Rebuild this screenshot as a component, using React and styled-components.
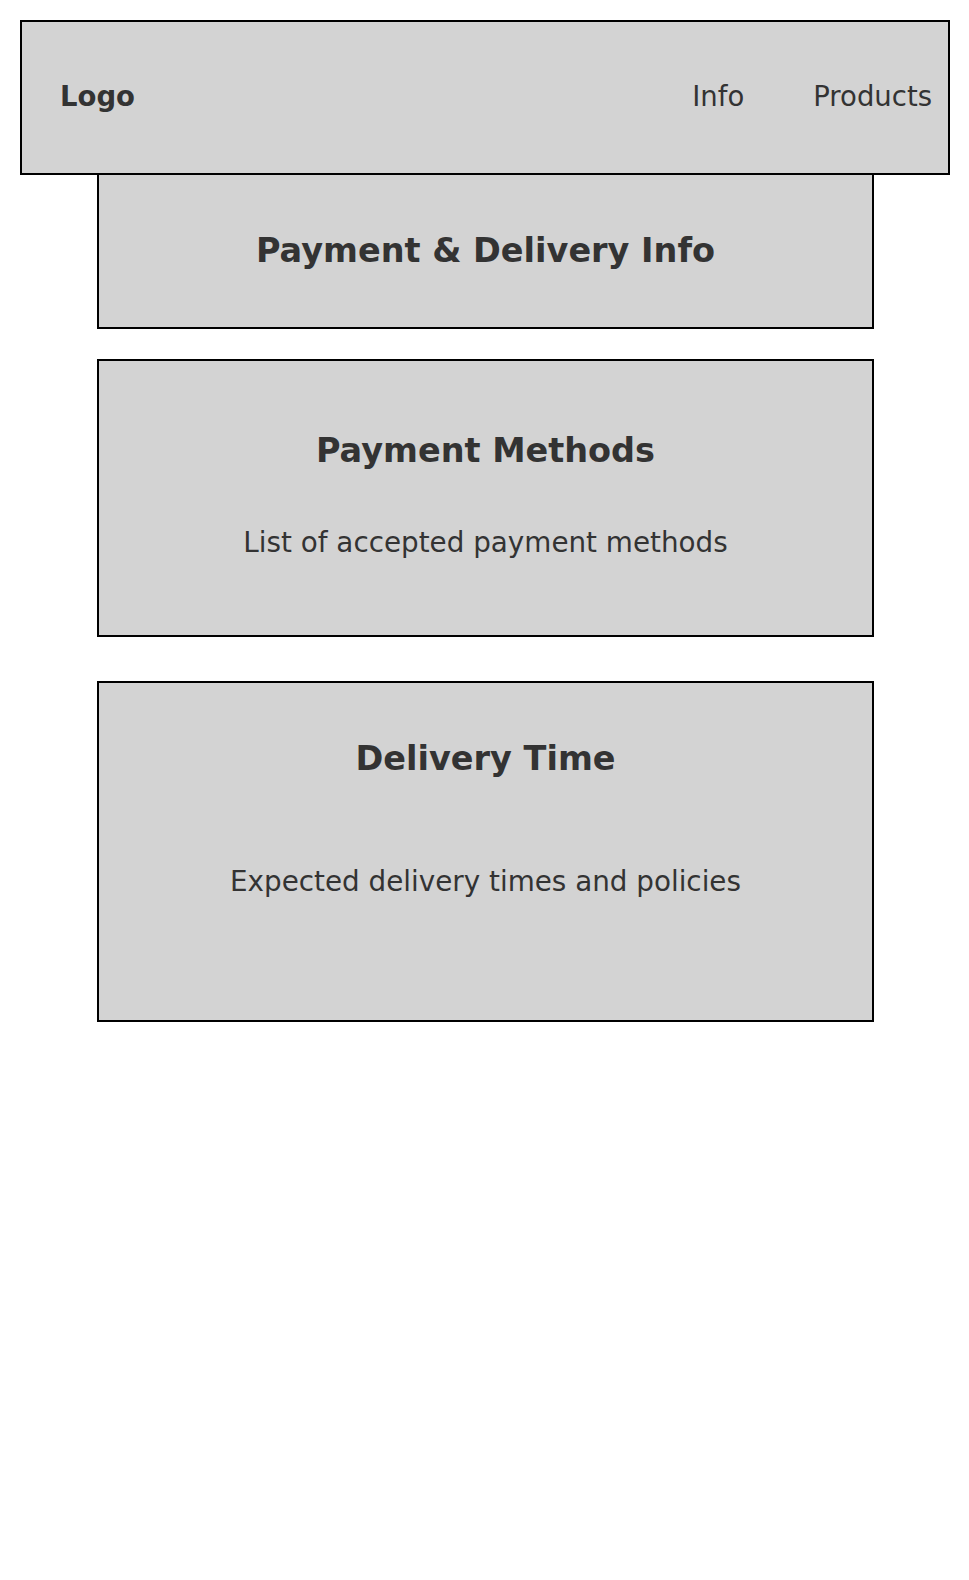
import React from 'react';
import styled, { createGlobalStyle } from 'styled-components';

const GlobalStyle = createGlobalStyle`
  body {
    margin: 0;
    background: #fff;
    font-family: "DejaVu Sans", Verdana, sans-serif;
    color: #333;
  }
`;

const Header = styled.header`
  margin: 20px 19px 0 20px;
  height: 155px;
  box-sizing: border-box;
  border: 2px solid #000;
  background: #d3d3d3;
  display: flex;
  align-items: center;
  justify-content: space-between;
  padding: 0 16px 3px 38px;
`;

const Logo = styled.div`
  font-size: 27.5px;
  font-weight: bold;
`;

const Nav = styled.nav`
  display: flex;
  gap: 69px;
`;

const NavLink = styled.a`
  font-size: 27.5px;
  color: #333;
  text-decoration: none;
`;

const Main = styled.main`
  display: flex;
  flex-direction: column;
  align-items: flex-start;
  padding-left: 97px;
`;

const Section = styled.section`
  width: 777px;
  height: ${props => props.h}px;
  box-sizing: border-box;
  margin-top: ${props => props.gap || 0}px;
  padding-top: ${props => props.pt}px;
  border: 2px solid #000;
  border-top: ${props => props.flush ? 'none' : '2px solid #000'};
  background: #d3d3d3;
  text-align: center;
`;

const Heading = styled.h2`
  margin: 0;
  font-size: 33.5px;
  line-height: 40px;
  font-weight: bold;
`;

const Text = styled.p`
  margin: ${props => props.mt}px 0 0;
  font-size: 27.8px;
  line-height: 32px;
`;

const App = () => {
  return (
    <>
      <GlobalStyle />
      <Header>
        <Logo>Logo</Logo>
        <Nav>
          <NavLink href="#">Info</NavLink>
          <NavLink href="#">Products</NavLink>
        </Nav>
      </Header>
      <Main>
        <Section flush h={154} pt={56}>
          <Heading>Payment &amp; Delivery Info</Heading>
        </Section>
        <Section gap={30} h={278} pt={70}>
          <Heading>Payment Methods</Heading>
          <Text mt={56}>List of accepted payment methods</Text>
        </Section>
        <Section gap={44} h={341} pt={56}>
          <Heading>Delivery Time</Heading>
          <Text mt={87}>Expected delivery times and policies</Text>
        </Section>
      </Main>
    </>
  );
};

export default App;
